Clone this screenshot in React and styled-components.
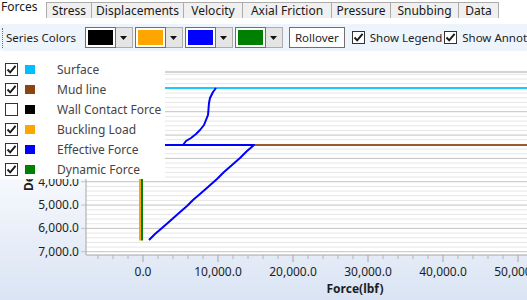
import React from 'react';
import styled, { createGlobalStyle } from 'styled-components';

const GlobalStyle = createGlobalStyle`
  html, body {
    margin: 0;
    padding: 0;
    background: #ffffff;
  }
  body {
    font-family: 'Segoe UI', 'Noto Sans', sans-serif;
    width: 527px;
    height: 300px;
    overflow: hidden;
  }
`;

const tabs = [
  { name: 'Forces', w: 47, active: true },
  { name: 'Stress', w: 46 },
  { name: 'Displacements', w: 93 },
  { name: 'Velocity', w: 60 },
  { name: 'Axial Friction', w: 90 },
  { name: 'Pressure', w: 60 },
  { name: 'Snubbing', w: 69 },
  { name: 'Data', w: 41 },
];

const seriesColors = ['#000000', '#ffa500', '#0000ff', '#008000'];

const legendItems = [
  { name: 'Surface', color: '#00bfff', checked: true },
  { name: 'Mud line', color: '#8b4513', checked: true },
  { name: 'Wall Contact Force', color: '#000000', checked: false },
  { name: 'Buckling Load', color: '#ffa500', checked: true },
  { name: 'Effective Force', color: '#0000ff', checked: true },
  { name: 'Dynamic Force', color: '#008000', checked: true },
];

// chart scales (page coordinates)
const PLOT_LEFT = 86;
const PLOT_TOP = 73;
const PLOT_BOTTOM = 256;
const PLOT_RIGHT = 540;
const xOf = (f) => 143 + f * 0.0075;
const yOf = (d) => 89.4 + d * 0.023333;

const fmt = (n) => n.toLocaleString('en-US', { minimumFractionDigits: 1, maximumFractionDigits: 1 });

const CheckMark = () => (
  <svg width='11' height='11' viewBox='0 0 11 11'>
    <path d='M1.5 5.5 L4.2 8.4 L9.6 1.8' fill='none' stroke='#1a1a1a' strokeWidth='1.9' />
  </svg>
);

const Chart = () => {
  const minor = [];
  const major = [];
  for (let d = -600; d <= 7000; d += 200) {
    if (d % 1000 === 0) major.push(d);
    else minor.push(d);
  }
  const xMinor = [];
  const xMajor = [];
  for (let f = -6000; f <= 52000; f += 2000) {
    if (f % 10000 === 0) xMajor.push(f);
    else xMinor.push(f);
  }

  const effective =
    'M216 89 L213 93 L210 99 L209 104 L208.5 110 L208 116 L206 121 L204 126 L200 131 ' +
    'L196 135 L191 139 L186 142 L183 146 L86 146 M86 146 L254 146 L247 152 L240 159 ' +
    'L232 166 L224 173 L217 180 L208 188 L200 195 L193 201 L187 207 L179 214 L170 222 ' +
    'L162 229 L155 235 L149 241';

  return (
    <svg width='527' height='248' viewBox='0 52 527 248'>
      <rect x={PLOT_LEFT} y={PLOT_TOP} width={PLOT_RIGHT - PLOT_LEFT} height={PLOT_BOTTOM - PLOT_TOP} fill='#ffffff' />
      {minor.map((d) => (
        <line key={'m' + d} x1={PLOT_LEFT} x2={PLOT_RIGHT} y1={yOf(d)} y2={yOf(d)} stroke='#e6e6e6' strokeWidth='1' />
      ))}
      {major.map((d) => (
        <line key={'M' + d} x1={PLOT_LEFT - 5} x2={PLOT_RIGHT} y1={yOf(d)} y2={yOf(d)} stroke='#c2c2c2' strokeWidth='1' />
      ))}
      <line x1={PLOT_LEFT} x2={PLOT_RIGHT} y1={PLOT_TOP} y2={PLOT_TOP} stroke='#a6a6a6' />
      <line x1={PLOT_LEFT} x2={PLOT_LEFT} y1={PLOT_TOP} y2={PLOT_BOTTOM} stroke='#a6a6a6' />
      <line x1={PLOT_LEFT} x2={PLOT_RIGHT} y1={PLOT_BOTTOM} y2={PLOT_BOTTOM} stroke='#a6a6a6' />
      {xMinor.map((f) => (
        <line key={'xm' + f} x1={xOf(f)} x2={xOf(f)} y1={PLOT_BOTTOM} y2={PLOT_BOTTOM + 4} stroke='#b4b4b4' />
      ))}
      {xMajor.map((f) => (
        <line key={'xM' + f} x1={xOf(f)} x2={xOf(f)} y1={PLOT_BOTTOM} y2={PLOT_BOTTOM + 7} stroke='#a6a6a6' />
      ))}
      {xMajor.map((f) => (
        <text key={'xl' + f} x={xOf(f)} y={277} textAnchor='middle' fontSize='12' fill='#1e1e1e' fontFamily="'Segoe UI', 'Noto Sans', sans-serif">
          {fmt(f)}
        </text>
      ))}
      {/* labels above 4,000 sit under the legend */}
      {major
        .filter((d) => d >= 4000)
        .map((d) => (
          <text key={'yl' + d} x={79} y={yOf(d) + 4} textAnchor='end' fontSize='12' fill='#1e1e1e' fontFamily="'Segoe UI', 'Noto Sans', sans-serif">
            {fmt(d)}
          </text>
        ))}
      <text x={355} y={294} textAnchor='middle' fontSize='12' fontWeight='bold' fill='#1e1e1e' fontFamily="'Segoe UI', 'Noto Sans', sans-serif">
        Force(lbf)
      </text>
      <text transform='translate(33 192) rotate(-90)' fontSize='12' fontWeight='bold' fill='#1e1e1e' fontFamily="'Segoe UI', 'Noto Sans', sans-serif">
        Depth(ft)
      </text>

      <line x1={PLOT_LEFT} x2={PLOT_RIGHT} y1={89} y2={89} stroke='#1ec8fa' strokeWidth='2' />
      <line x1={PLOT_LEFT} x2={PLOT_RIGHT} y1={146} y2={146} stroke='#9b5b2e' strokeWidth='2' />
      <line x1={140} x2={140} y1={89} y2={241.5} stroke='#ffa500' strokeWidth='2' />
      <line x1={142} x2={142} y1={89} y2={241.5} stroke='#008000' strokeWidth='2' />
      <path d={effective} fill='none' stroke='#0000ff' strokeWidth='2' strokeLinejoin='round' />
    </svg>
  );
};

const App = () => {
  return (
    <Page>
      <GlobalStyle />
      <TabStrip>
        {tabs.map((t) => (
          <Tab key={t.name} $w={t.w} $active={t.active}>
            {t.name}
          </Tab>
        ))}
      </TabStrip>

      <Toolbar>
        <Grip />
        <ToolLabel>Series Colors</ToolLabel>
        <Pickers>
          {seriesColors.map((c) => (
            <ColorPicker key={c}>
              <Swatch>
                <SwatchFill $color={c} />
              </Swatch>
              <DropButton>
                <svg width='7' height='4' viewBox='0 0 7 4'>
                  <path d='M0 0 H7 L3.5 4 Z' fill='#111' />
                </svg>
              </DropButton>
            </ColorPicker>
          ))}
        </Pickers>
        <PlainButton>Rollover</PlainButton>
        <CheckOption>
          <CheckBox>
            <CheckMark />
          </CheckBox>
          Show Legend
        </CheckOption>
        <CheckOption>
          <CheckBox>
            <CheckMark />
          </CheckBox>
          Show Annotations
        </CheckOption>
      </Toolbar>

      <ChartArea>
        <Chart />
        <Legend>
          {legendItems.map((item) => (
            <LegendRow key={item.name}>
              <CheckBox>{item.checked && <CheckMark />}</CheckBox>
              <LegendSwatch $color={item.color} />
              <LegendText>{item.name}</LegendText>
            </LegendRow>
          ))}
        </Legend>
      </ChartArea>
    </Page>
  );
};

const Page = styled.div`
  width: 527px;
  height: 300px;
  overflow: hidden;
  display: flex;
  flex-direction: column;
  font-size: 12px;
  color: #1e1e1e;
`;

const TabStrip = styled.div`
  display: flex;
  align-items: flex-end;
  height: 18px;
  flex-shrink: 0;
`;

const Tab = styled.div`
  width: ${(p) => p.$w}px;
  box-sizing: border-box;
  height: ${(p) => (p.$active ? 18 : 16)}px;
  margin-left: ${(p) => (p.$active ? 0 : -1)}px;
  display: flex;
  justify-content: center;
  align-items: ${(p) => (p.$active ? 'flex-start' : 'center')};
  background: ${(p) => (p.$active ? '#ffffff' : '#f0f0f0')};
  border: ${(p) => (p.$active ? 'none' : '1px solid #acacac')};
  border-bottom: none;
  font-size: 12px;
  line-height: 14px;
  color: #1a1a1a;
  white-space: nowrap;
  &:first-child {
    justify-content: flex-start;
    padding-left: 1px;
  }
`;

const Toolbar = styled.div`
  margin-top: 6px;
  height: 27px;
  flex-shrink: 0;
  display: flex;
  align-items: center;
  background: #eef4fc;
  border-radius: 3px 0 0 3px;
  padding-left: 2px;
  white-space: nowrap;
  overflow: hidden;
  font-size: 11.5px;
`;

const Grip = styled.div`
  width: 1px;
  height: 20px;
  border-left: 1px dotted #6b6b6b;
  margin-right: 3px;
`;

const ToolLabel = styled.span`
  margin-right: 9px;
`;

const Pickers = styled.div`
  display: flex;
  gap: 2px;
  margin-right: 6px;
`;

const ColorPicker = styled.div`
  display: flex;
  height: 21px;
`;

const Swatch = styled.div`
  width: 31px;
  box-sizing: border-box;
  border: 1px solid #6f6f6f;
  background: #ffffff;
  padding: 2px;
`;

const SwatchFill = styled.div`
  width: 100%;
  height: 100%;
  background: ${(p) => p.$color};
`;

const DropButton = styled.div`
  width: 17px;
  box-sizing: border-box;
  border: 1px solid #acacac;
  border-left: none;
  background: #e5e5e5;
  display: flex;
  align-items: center;
  justify-content: center;
`;

const PlainButton = styled.div`
  height: 21px;
  box-sizing: border-box;
  border: 1px solid #707070;
  background: #ffffff;
  padding: 0 5px;
  display: flex;
  align-items: center;
  margin-right: 7px;
`;

const CheckOption = styled.label`
  display: flex;
  align-items: center;
  gap: 5px;
  margin-right: 2px;
`;

const CheckBox = styled.span`
  width: 13px;
  height: 13px;
  box-sizing: border-box;
  border: 1px solid #333333;
  background: #ffffff;
  display: flex;
  align-items: center;
  justify-content: center;
  flex-shrink: 0;
`;

const ChartArea = styled.div`
  position: relative;
  flex: 1;
  background: linear-gradient(to bottom, #ffffff 35%, #dae4f4 100%);
  svg {
    display: block;
  }
`;

const Legend = styled.div`
  position: absolute;
  left: 0;
  top: 5px;
  width: 165px;
  height: 123px;
  box-sizing: border-box;
  padding-top: 3px;
  background: #ffffff;
  display: flex;
  flex-direction: column;
`;

const LegendRow = styled.div`
  display: flex;
  align-items: center;
  height: 20px;
  padding-left: 5px;
`;

const LegendSwatch = styled.span`
  width: 10px;
  height: 9px;
  margin-left: 7px;
  background: ${(p) => p.$color};
`;

const LegendText = styled.span`
  margin-left: 22px;
  font-size: 12px;
  color: #444444;
  white-space: nowrap;
`;

export default App;
